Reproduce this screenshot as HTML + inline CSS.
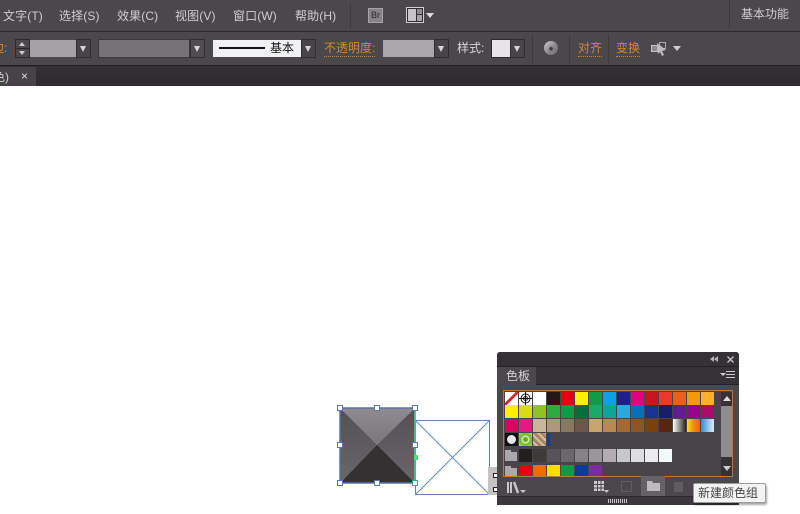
<!DOCTYPE html>
<html><head><meta charset="utf-8">
<style>
html,body{margin:0;padding:0;background:#fff}
#p{position:relative;width:800px;height:514px;overflow:hidden;background:#fff;font-family:"Liberation Sans","Noto Sans CJK SC",sans-serif}
#p div{position:absolute;box-sizing:border-box}
.t{position:absolute;white-space:nowrap;font-size:12px;line-height:14px;color:#d0cecf}
.m{letter-spacing:.12px}
.o{color:#d28a35}
.u{border-bottom:1px dotted #c9822f;padding-bottom:1px}
.dd{width:15px;height:19px;background:#47454a;border:1px solid #2f2d2f}
.dd:after{content:"";position:absolute;left:3px;top:6px;border-left:3.500px solid transparent;border-right:3.500px solid transparent;border-top:6px solid #d8d6d8}
.sw{width:13px;height:13px}
.tri{width:0;height:0;border-left:4px solid transparent;border-right:4px solid transparent;border-top:5px solid #cfcdcf}
</style></head><body>
<div id="p">
<!-- menu bar -->
<div style="left:0;top:0;width:800px;height:32px;background:#4a484b"></div>
<div style="left:0;top:31px;width:800px;height:1px;background:#2c2a2c"></div>
<div class="t m" style="left:3px;top:9px">文字(T)</div>
<div class="t m" style="left:59px;top:9px">选择(S)</div>
<div class="t m" style="left:117px;top:9px">效果(C)</div>
<div class="t m" style="left:175px;top:9px">视图(V)</div>
<div class="t m" style="left:233px;top:9px">窗口(W)</div>
<div class="t m" style="left:295px;top:9px">帮助(H)</div>
<div style="left:350px;top:3px;width:1px;height:26px;background:#3c3a3c"></div>
<div style="left:368px;top:8px;width:15px;height:15px;background:#858387;border:1px solid #a5a3a6;font-size:9px;line-height:13px;text-align:center;color:#2a282a">Br</div>
<div style="left:406px;top:7px;width:18px;height:16px;background:#2f2d30;border:1px solid #d0ced0"></div>
<div style="left:408px;top:9px;width:8px;height:12px;background:#c6c4c8"></div>
<div style="left:417px;top:9px;width:5px;height:5px;background:#8e8c90"></div>
<div style="left:417px;top:15px;width:5px;height:6px;background:#a5a3a7"></div>
<div class="tri" style="left:426px;top:13px;border-top-color:#dddbdd"></div>
<div style="left:729px;top:0;width:1px;height:28px;background:#3a383a"></div>
<div class="t" style="left:741px;top:7px;color:#cfcdcf">基本功能</div>
<!-- control bar -->
<div style="left:0;top:32px;width:800px;height:33px;background:#4a484b"></div>
<div style="left:0;top:65px;width:800px;height:1px;background:#1f1d1f"></div>
<div class="t o" style="left:-8px;top:41px">边:</div>
<div style="left:15px;top:39px;width:15px;height:19px;background:#4a484b;border:1px solid #2b292b"></div>
<div style="left:15px;top:48px;width:15px;height:1px;background:#2b292b"></div>
<div class="tri" style="left:19px;top:42px;border-left-width:3.500px;border-right-width:3.500px;border-top:0;border-bottom:4px solid #cfcdcf"></div>
<div class="tri" style="left:19px;top:51px;border-left-width:3.500px;border-right-width:3.500px;border-top-width:4px"></div>
<div style="left:30px;top:40px;width:46px;height:17px;background:#a3a1a5"></div>
<div class="dd" style="left:76px;top:39px"></div>
<div style="left:98px;top:39px;width:92px;height:19px;background:#757377;border:1px solid #3a383a"></div>
<div class="dd" style="left:190px;top:39px;background:#4f4d50"></div>
<div style="left:213px;top:40px;width:88px;height:17px;background:#f1f0f2"></div>
<div style="left:219px;top:47px;width:46px;height:2px;background:#111"></div>
<div class="t" style="left:270px;top:41px;color:#111">基本</div>
<div class="dd" style="left:301px;top:39px"></div>
<div class="t o" style="left:324px;top:41px"><span class="u">不透明度:</span></div>
<div style="left:383px;top:40px;width:52px;height:17px;background:#a9a7ab"></div>
<div class="dd" style="left:434px;top:39px"></div>
<div class="t" style="left:457px;top:41px;color:#d8d6d8">样式:</div>
<div style="left:491px;top:39px;width:20px;height:19px;background:#e6e4e8;border:1px solid #2b292b"></div>
<div class="dd" style="left:510px;top:39px"></div>
<div style="left:532px;top:35px;width:1px;height:28px;background:#3c3a3c"></div>
<div style="left:544px;top:41px;width:14px;height:14px;border-radius:50%;background:radial-gradient(circle at 50% 55%,#3a383a 0 1px,transparent 2.500px),linear-gradient(135deg,#d0ced0,#8a888a 55%,#6a686a)"></div>
<div style="left:569px;top:35px;width:1px;height:28px;background:#3c3a3c"></div>
<div class="t o" style="left:578px;top:41px"><span class="u">对齐</span></div>
<div style="left:608px;top:35px;width:1px;height:28px;background:#3c3a3c"></div>
<div class="t o" style="left:616px;top:41px"><span class="u">变换</span></div>
<svg style="position:absolute;left:650px;top:41px" width="18" height="15"><rect x="1.500" y="4.500" width="6" height="6" fill="#8a888a" stroke="#c8c6c8"/><rect x="9.500" y="1.500" width="6" height="6" fill="none" stroke="#aaa8aa"/><path d="M7 2L16 9L12 10L14 14L12 15L10 11L8 13Z" fill="#bdbbbd"/></svg>
<div class="tri" style="left:673px;top:46px"></div>
<!-- tab bar -->
<div style="left:0;top:66px;width:800px;height:20px;background:linear-gradient(#333134,#2c2a2c)"></div>
<div style="left:0;top:67px;width:36px;height:19px;background:#454346"></div>
<div class="t" style="left:-7px;top:70px">色)</div>
<div class="t" style="left:21px;top:69px;color:#ddd">×</div>
<!-- artwork -->
<svg style="position:absolute;left:330px;top:400px" width="170" height="100">
<defs>
<linearGradient id="a" x1="0" y1="0" x2="0" y2="1"><stop offset="0" stop-color="#8f8b8f"/><stop offset="1" stop-color="#7a767a"/></linearGradient>
<linearGradient id="b" x1="0" y1="0" x2="0" y2="1"><stop offset="0" stop-color="#544f53"/><stop offset="1" stop-color="#6a666a"/></linearGradient>
</defs>
<polygon points="10,8 85,8 47,44.500" fill="url(#a)"/>
<polygon points="85,8 85,83 47,44.500" fill="url(#b)"/>
<polygon points="10,8 10,83 47,44.500" fill="url(#b)"/>
<polygon points="10,83 85,83 47,44.500" fill="#353133"/>
<rect x="85.500" y="20.500" width="74" height="74" fill="#fff" stroke="#5f86b0"/>
<path d="M85.500 20.500L159.500 94.500M159.500 20.500L85.500 94.500" stroke="#6a8cb0" fill="none"/>
<rect x="10" y="8" width="75" height="75" fill="none" stroke="#5a73aa" stroke-width="1.500"/>
<path d="M85 10V82" stroke="#49c98a" stroke-width="1.500"/>
<rect x="84" y="55" width="4" height="5" fill="#49e070"/>
<g fill="#fff" stroke="#5a73aa">
<rect x="7.500" y="5.500" width="5" height="5"/><rect x="44.500" y="5.500" width="5" height="5"/><rect x="82.500" y="5.500" width="5" height="5"/>
<rect x="7.500" y="42.500" width="5" height="5"/><rect x="82.500" y="42.500" width="5" height="5"/>
<rect x="7.500" y="80.500" width="5" height="5"/><rect x="44.500" y="80.500" width="5" height="5"/><rect x="82.500" y="80.500" width="5" height="5" stroke="#3fa87a"/>
</g>
</svg>
<div style="left:488px;top:467px;width:10px;height:28px;background:#c4c2c2"></div>
<div style="left:493px;top:473px;width:5px;height:5px;border:1px solid #222;background:#fff"></div>
<div style="left:493px;top:487px;width:5px;height:5px;border:1px solid #222;background:#fff"></div>
<!-- panel -->
<div style="left:497px;top:352px;width:242px;height:153px;background:#4a484b;border-radius:3px 3px 0 0"></div>
<div style="left:497px;top:352px;width:242px;height:14px;background:#353236;border-radius:3px 3px 0 0"></div>
<div style="left:497px;top:366px;width:242px;height:1px;background:#232123"></div>
<div style="left:497px;top:367px;width:242px;height:17px;background:#353236"></div>
<div style="left:497px;top:384px;width:242px;height:1px;background:#232123"></div>
<div style="left:497px;top:367px;width:39px;height:18px;background:#4a484b"></div>
<div class="t" style="left:506px;top:369px;color:#d4d2d4">色板</div>
<svg style="position:absolute;left:709px;top:355px" width="10" height="9"><path d="M5 1V7L1 4ZM9 1V7L5 4Z" fill="#b5b3b5"/></svg>
<svg style="position:absolute;left:726px;top:355px" width="9" height="9"><path d="M1.500 1.500L7.500 7.500M7.500 1.500L1.500 7.500" stroke="#c8c6c8" stroke-width="1.300"/></svg>
<div class="tri" style="left:720px;top:373px;border-left-width:3px;border-right-width:3px;border-top-width:3px"></div>
<div style="left:726px;top:371px;width:9px;height:7px;border-top:1px solid #ccc;border-bottom:1px solid #ccc"></div>
<div style="left:726px;top:374px;width:9px;height:1px;background:#ccc"></div>
<!-- swatch box -->
<div style="left:503px;top:390px;width:230px;height:87px;background:#47454a;border:1px solid #b07a45"></div>
<div class="sw" style="left:505px;top:392px;background:linear-gradient(135deg,#fff 42%,#d02a30 42%,#d02a30 56%,#fff 56%)"></div>
<div class="sw" style="left:519px;top:392px;background:#fff"></div>
<svg style="position:absolute;left:519px;top:392px" width="13" height="13"><circle cx="6.500" cy="6.500" r="4.500" fill="none" stroke="#111"/><circle cx="6.500" cy="6.500" r="2" fill="none" stroke="#111"/><path d="M6.500 0V13M0 6.500H13" stroke="#111"/></svg>
<div class="sw" style="left:533px;top:392px;background:#fff"></div>
<div class="sw" style="left:547px;top:392px;background:#231815"></div>
<div class="sw" style="left:561px;top:392px;background:#e60012"></div>
<div class="sw" style="left:575px;top:392px;background:#fff100"></div>
<div class="sw" style="left:589px;top:392px;background:#0f9b4a"></div>
<div class="sw" style="left:603px;top:392px;background:#0ea0e6"></div>
<div class="sw" style="left:617px;top:392px;background:#1d2088"></div>
<div class="sw" style="left:631px;top:392px;background:#e4007f"></div>
<div class="sw" style="left:645px;top:392px;background:#c9151e"></div>
<div class="sw" style="left:659px;top:392px;background:#e83a26"></div>
<div class="sw" style="left:673px;top:392px;background:#eb6018"></div>
<div class="sw" style="left:687px;top:392px;background:#f39a0a"></div>
<div class="sw" style="left:701px;top:392px;background:#fcb02c"></div>

<div class="sw" style="left:505px;top:405px;background:#fff000"></div>
<div class="sw" style="left:519px;top:405px;background:#d6dc13"></div>
<div class="sw" style="left:533px;top:405px;background:#8fc31f"></div>
<div class="sw" style="left:547px;top:405px;background:#2aab3c"></div>
<div class="sw" style="left:561px;top:405px;background:#0d9c45"></div>
<div class="sw" style="left:575px;top:405px;background:#046f3a"></div>
<div class="sw" style="left:589px;top:405px;background:#18a96b"></div>
<div class="sw" style="left:603px;top:405px;background:#0aa59b"></div>
<div class="sw" style="left:617px;top:405px;background:#2ea7e0"></div>
<div class="sw" style="left:631px;top:405px;background:#0a6fba"></div>
<div class="sw" style="left:645px;top:405px;background:#1c3393"></div>
<div class="sw" style="left:659px;top:405px;background:#151e68"></div>
<div class="sw" style="left:673px;top:405px;background:#5f1e8c"></div>
<div class="sw" style="left:687px;top:405px;background:#92068e"></div>
<div class="sw" style="left:701px;top:405px;background:#ab0a69"></div>

<div class="sw" style="left:505px;top:419px;background:#d7095c"></div>
<div class="sw" style="left:519px;top:419px;background:#e6197e"></div>
<div class="sw" style="left:533px;top:419px;background:#c9b69b"></div>
<div class="sw" style="left:547px;top:419px;background:#ae9781"></div>
<div class="sw" style="left:561px;top:419px;background:#8b7660"></div>
<div class="sw" style="left:575px;top:419px;background:#6b5848"></div>
<div class="sw" style="left:589px;top:419px;background:#cba36c"></div>
<div class="sw" style="left:603px;top:419px;background:#b9894d"></div>
<div class="sw" style="left:617px;top:419px;background:#a06a38"></div>
<div class="sw" style="left:631px;top:419px;background:#8c5522"></div>
<div class="sw" style="left:645px;top:419px;background:#7a4109"></div>
<div class="sw" style="left:659px;top:419px;background:#54280c"></div>
<div class="sw" style="left:673px;top:419px;background:linear-gradient(90deg,#fff,#222)"></div>
<div class="sw" style="left:687px;top:419px;background:linear-gradient(90deg,#ffe100,#f08a1a,#e8611a)"></div>
<div class="sw" style="left:701px;top:419px;background:linear-gradient(90deg,#2a8fd0,#9cc9ec 60%,#dfeaf4)"></div>

<div class="sw" style="left:505px;top:433px;background:#111"></div>
<div style="left:507px;top:435px;width:9px;height:9px;border-radius:50%;background:#e8e8e8"></div>
<div class="sw" style="left:519px;top:433px;background:radial-gradient(circle,#5aa82a 0 2px,#e8ecd0 3px,#6fb52a 5px,#b9d860 9px)"></div>
<div class="sw" style="left:533px;top:433px;background:repeating-linear-gradient(45deg,#b28a6a 0 2px,#cfc0a2 2px 4px,#9a7a5a 4px 5px)"></div>
<div style="left:547px;top:433px;width:3px;height:13px;background:#1438b4"></div>

<div style="left:505px;top:452px;width:12px;height:9px;background:#aaa8aa"></div>
<div style="left:505px;top:450px;width:6px;height:3px;background:#aaa8aa"></div>
<div class="sw" style="left:519px;top:449px;background:#231f1f"></div>
<div class="sw" style="left:533px;top:449px;background:#3e3a39"></div>
<div class="sw" style="left:547px;top:449px;background:#56545a"></div>
<div class="sw" style="left:561px;top:449px;background:#6a686d"></div>
<div class="sw" style="left:575px;top:449px;background:#858387"></div>
<div class="sw" style="left:589px;top:449px;background:#99979b"></div>
<div class="sw" style="left:603px;top:449px;background:#b0aeb2"></div>
<div class="sw" style="left:617px;top:449px;background:#c6c8cb"></div>
<div class="sw" style="left:631px;top:449px;background:#dcdee0"></div>
<div class="sw" style="left:645px;top:449px;background:#ecebf0"></div>
<div class="sw" style="left:659px;top:449px;background:#f5f8fb"></div>

<div style="left:505px;top:468px;width:12px;height:8px;background:#aaa8aa"></div>
<div style="left:505px;top:466px;width:6px;height:3px;background:#aaa8aa"></div>
<div class="sw" style="left:519px;top:465px;height:11px;background:#e60012"></div>
<div class="sw" style="left:533px;top:465px;height:11px;background:#ed6c00"></div>
<div class="sw" style="left:547px;top:465px;height:11px;background:#ffdd00"></div>
<div class="sw" style="left:561px;top:465px;height:11px;background:#0c9b48"></div>
<div class="sw" style="left:575px;top:465px;height:11px;background:#0b3ba0"></div>
<div class="sw" style="left:589px;top:465px;height:11px;background:#7a2d9c"></div>
<!-- scrollbar -->
<div style="left:721px;top:392px;width:11px;height:84px;background:#343235"></div>
<div style="left:721px;top:406px;width:11px;height:51px;background:#8e8c90"></div>
<div class="tri" style="left:723px;top:396px;border-top:0;border-bottom:5px solid #ddd"></div>
<div class="tri" style="left:723px;top:466px"></div>
<!-- panel bottom -->
<svg style="position:absolute;left:506px;top:480px" width="22" height="15"><path d="M2 2V13M5 2V13" stroke="#c8c6c8" stroke-width="2"/><path d="M8 2L12 13" stroke="#c8c6c8" stroke-width="2.500"/><path d="M14 10H20L17 13Z" fill="#c8c6c8"/></svg>
<svg style="position:absolute;left:592px;top:479px" width="18" height="15"><path d="M2 2H12V12H2Z" fill="#cfcdcf"/><path d="M2 5.500H12M2 9H12M5.500 2V12M9 2V12" stroke="#4a484b"/><path d="M12 11H17L14.500 14Z" fill="#c8c6c8"/></svg>
<div style="left:621px;top:481px;width:11px;height:11px;border:1px solid #5f5d60"></div>
<div style="left:641px;top:476px;width:24px;height:20px;background:#646266"></div>
<svg style="position:absolute;left:646px;top:480px" width="15" height="12"><path d="M1 1H6L7 3H14V11H1Z" fill="#bdbbbd"/></svg>
<div style="left:674px;top:482px;width:9px;height:10px;background:#5f5d60"></div>
<div style="left:497px;top:496px;width:242px;height:1px;background:#2a282a"></div>
<div style="left:497px;top:497px;width:242px;height:8px;background:#3a383b"></div>
<div style="left:608px;top:499px;width:20px;height:4px;background:repeating-linear-gradient(90deg,#c8c6c8 0 1px,#3a383b 1px 2px)"></div>
<!-- tooltip -->
<div style="left:693px;top:483px;width:73px;height:20px;background:#f4f3f3;border:1px solid #9c9a9c;border-radius:2px;box-shadow:1px 2px 2px rgba(0,0,0,.35)"></div>
<div class="t" style="left:698px;top:486px;color:#444">新建颜色组</div>
</div>
</body></html>
